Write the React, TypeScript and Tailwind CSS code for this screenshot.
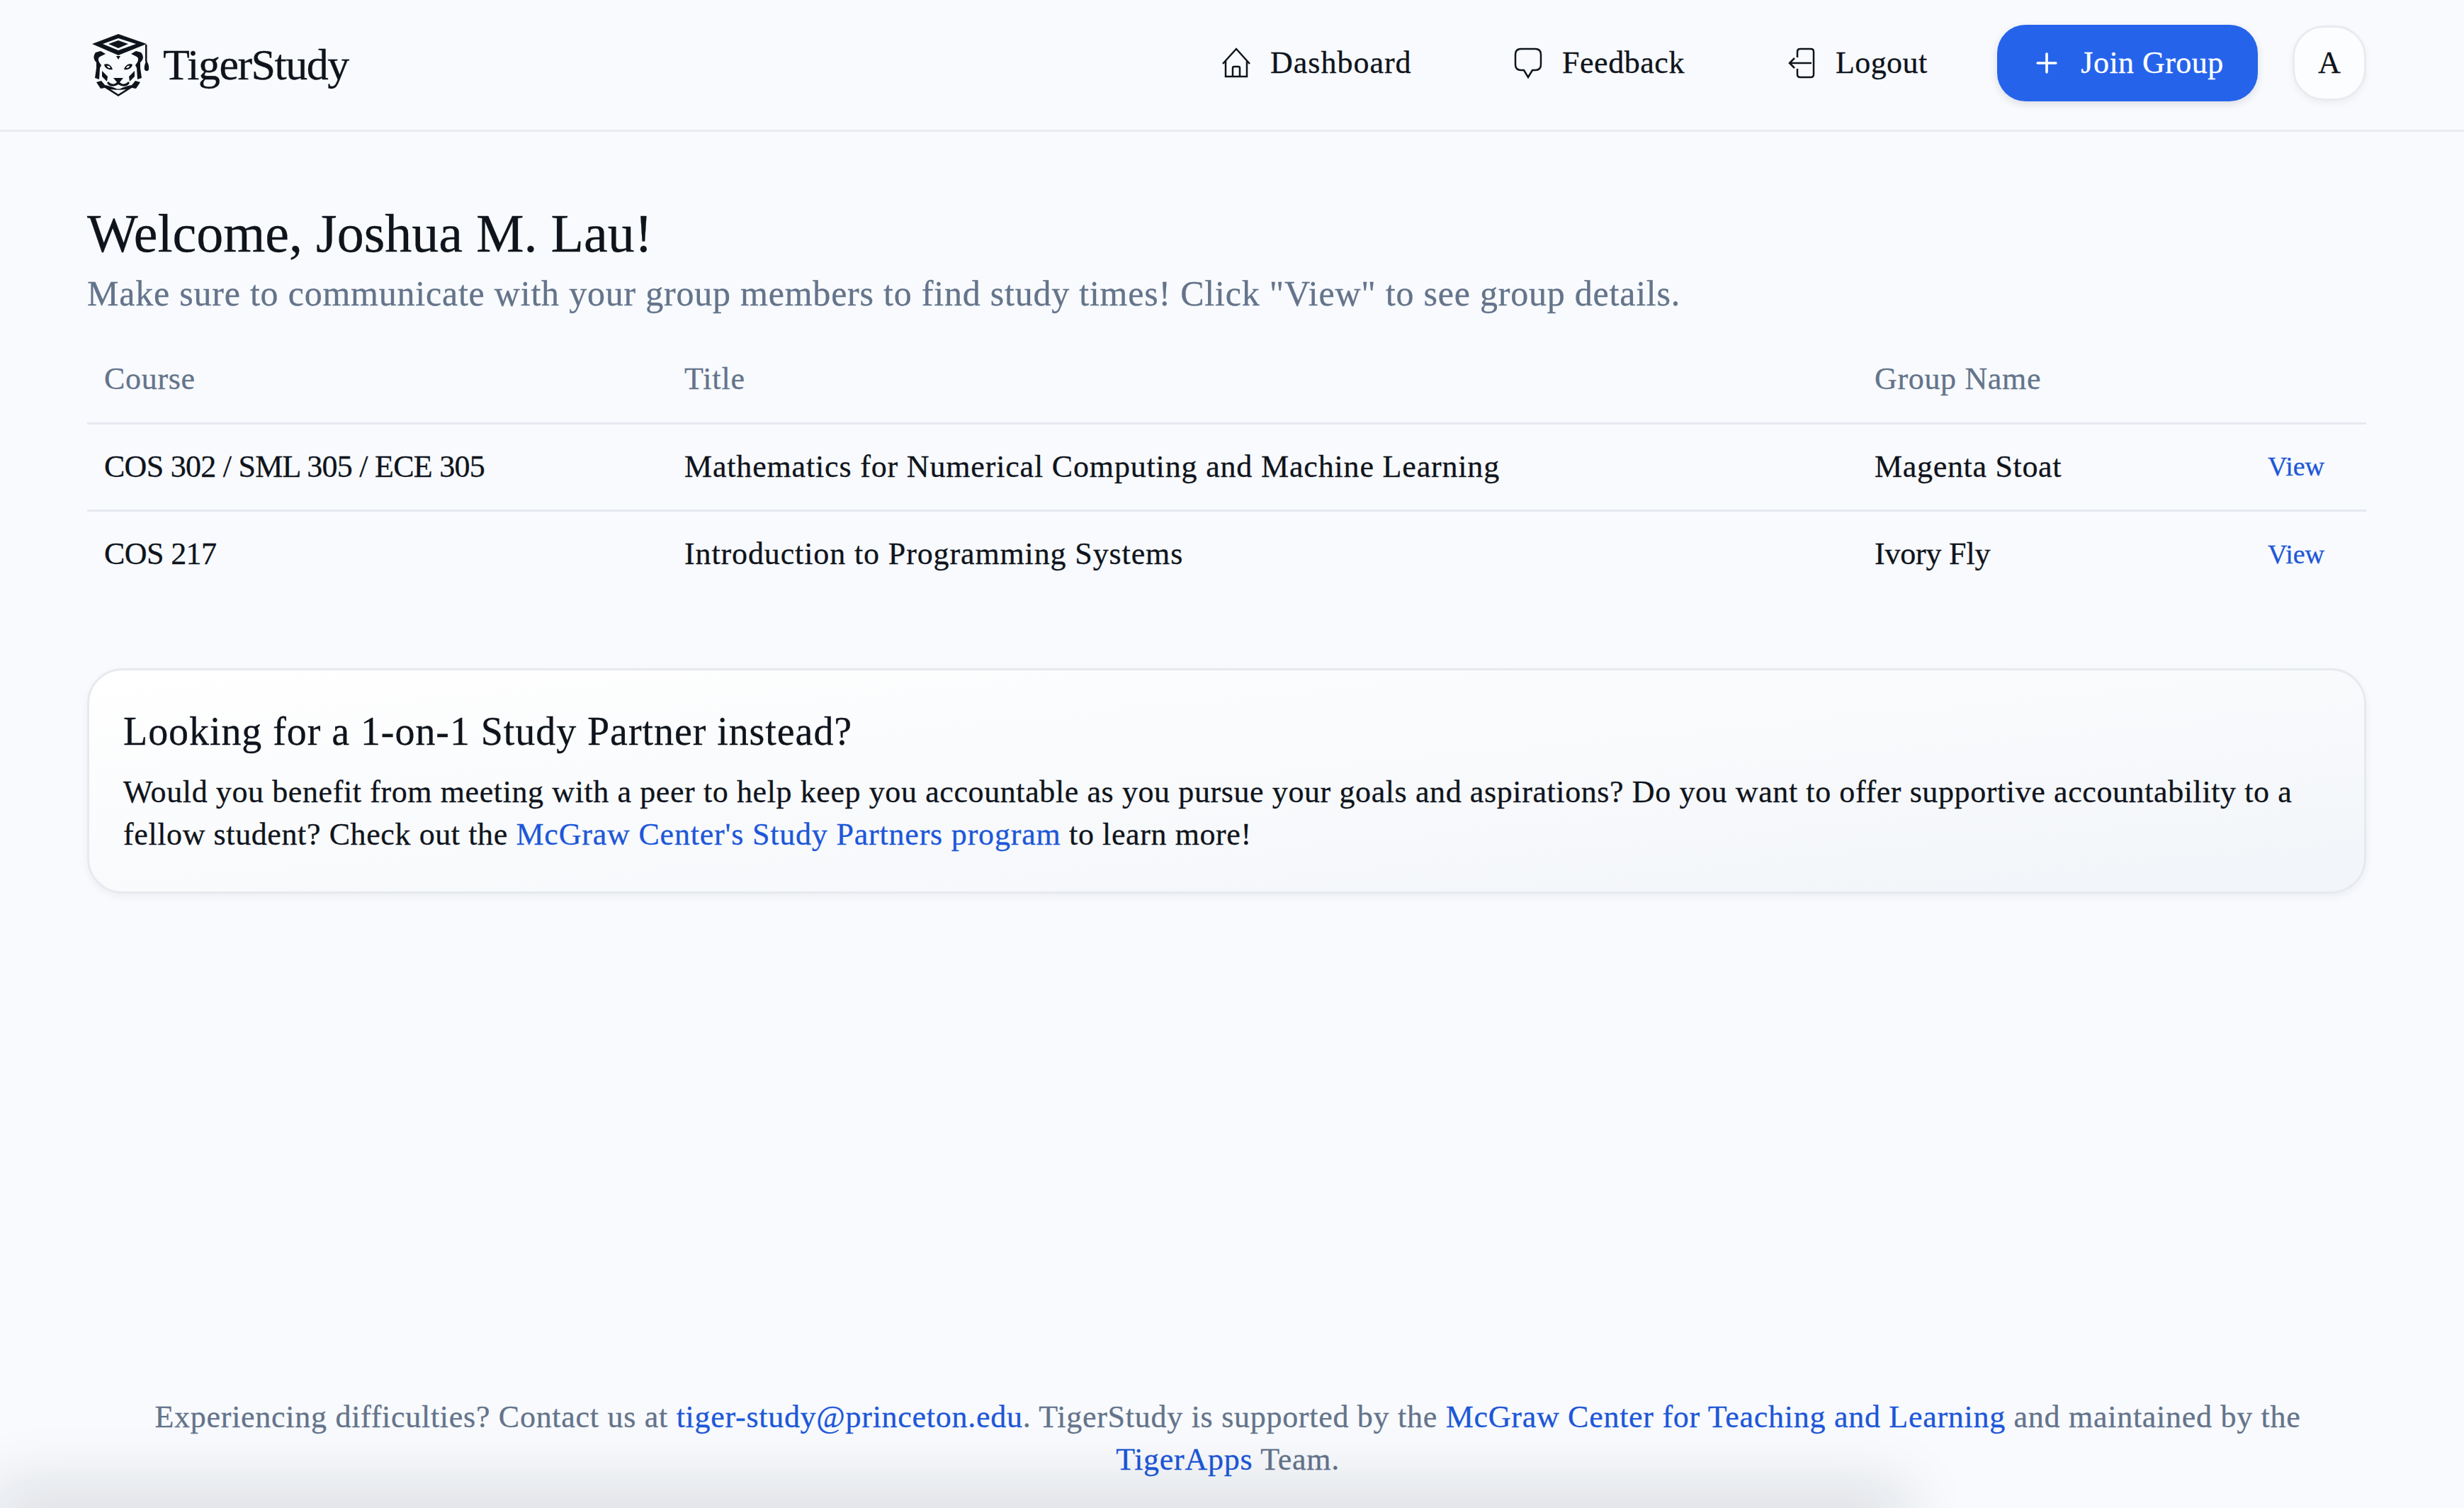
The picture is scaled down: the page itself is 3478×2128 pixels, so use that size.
import { Plus } from "lucide-react";

const serif = "font-['Liberation_Serif',serif]";

function TigerLogo() {
  return (
    <svg viewBox="0 0 80 88" className="h-[88px] w-[80px] shrink-0" fill="#0f141c">
      {/* cap */}
      <path fillRule="evenodd" d="M37 0 L77 14 L37 30 L0 14 Z M37 6 L15 14 L37 23 L62 14 Z" />
      <path d="M37 9 L51 14 L37 20 L23 14 Z" />
      <path d="M75 15 h2.5 v24 h-2.5 z" />
      <path d="M76.5 37 C79 41 81 46 80 50 C79 53 75 53 74 50 C73 46 75 41 76.5 37 Z" />
      {/* ears and head */}
      <path d="M5 26 C2 30 1 35 6 40 L6 48 L4 62 L10 64 L11 48 L13 44 C8 38 7 33 13 31 L19 28 L12 24 Z" />
      <path d="M69 26 C73 31 73 36 68 40 L68 48 L70 62 L64 64 L63 48 L61 44 C66 38 67 33 61 31 L55 28 L62 24 Z" />
      {/* eyes */}
      <path fillRule="evenodd" d="M17 43 C21 41 27 43 29 50 C24 51 18 49 17 43 Z M21 45 C22 48 24 48 26 48 C25 45 23 44 21 45 Z" />
      <path fillRule="evenodd" d="M57 43 C53 41 47 43 45 50 C50 51 56 49 57 43 Z M53 45 C52 48 50 48 48 48 C49 45 51 44 53 45 Z" />
      {/* stripes */}
      <path d="M14 52 L22 60 L21 67 L14 60 Z" />
      <path d="M60 52 L52 60 L53 67 L60 60 Z" />
      <path d="M34 31 L40 31 L37 36 Z" />
      {/* muzzle */}
      <path d="M30 62 H44 L39 68 C43 72 48 71 51 67 L53 69 C49 75 43 75 37 71 C31 75 25 75 21 69 L23 67 C26 71 31 72 35 68 Z" />
      <path d="M6 68 L13 66 L18 72 L23 73 L32 76 C35 78 39 78 42 76 L51 73 L56 72 L61 66 L68 68 L62 77 L56 76 L37 88 L18 76 L12 77 Z" />
      <path fill="#f8fafd" d="M26 78 C30 79 44 79 48 78 L37 85 Z" />
    </svg>
  );
}

function HouseIcon() {
  return (
    <svg viewBox="0 0 40 44" className="h-[44px] w-[40px]" fill="none" stroke="#0f141c" strokeWidth="2.5">
      <path d="M1 23 L20 2 L39 23" />
      <path d="M5 19 V41 H35 V19" />
      <path d="M15 41 V29 Q15 27 17 27 H23 Q25 27 25 29 V41" />
    </svg>
  );
}

function BubbleIcon() {
  return (
    <svg viewBox="0 0 40 44" className="h-[44px] w-[40px]" fill="none" stroke="#0f141c" strokeWidth="2.5">
      <path d="M10 2 H30 Q38 2 38 10 V24 Q38 32 30 32 H26 L20 42 L14 32 H10 Q2 32 2 24 V10 Q2 2 10 2 Z" />
    </svg>
  );
}

function LogoutIcon() {
  return (
    <svg viewBox="0 0 40 44" className="h-[44px] w-[40px]" fill="none" stroke="#0f141c" strokeWidth="2.5">
      <path d="M14 14 V6 Q14 2 18 2 H33 Q37 2 37 6 V38 Q37 42 33 42 H18 Q14 42 14 38 V30" />
      <path d="M34 22 H3 M10 15 L3 22 L10 29" />
    </svg>
  );
}

function NavLink({ icon, label, className }: { icon: React.ReactNode; label: string; className: string }) {
  return (
    <a className={`flex items-center gap-[28px] text-[44px] text-[#0f141c] ${className}`}>
      {icon}
      <span>{label}</span>
    </a>
  );
}

export default function App() {
  return (
    <div className={`${serif} relative flex min-h-screen flex-col overflow-hidden bg-[#f8fafd] text-[#0f141c] [-webkit-text-stroke:0.3px]`}>
      {/* Header */}
      <header className="flex h-[186px] shrink-0 items-center justify-between border-b-[3px] border-[#e8ebef] pl-[130px] pr-[138px]">
        <div className="flex items-center gap-[20px]">
          <TigerLogo />
          <span className="text-[62px] tracking-[-1.5px]">TigerStudy</span>
        </div>
        <nav className="mb-[6px] flex items-center">
          <NavLink icon={<HouseIcon />} label="Dashboard" className="w-[412px] tracking-[1px]" />
          <NavLink icon={<BubbleIcon />} label="Feedback" className="w-[386px] tracking-[0.55px]" />
          <NavLink icon={<LogoutIcon />} label="Logout" className="w-[296px] tracking-[0.4px]" />
          <button className="flex h-[108px] w-[368px] items-center justify-center gap-[26px] rounded-[40px] bg-[#2563eb] text-[44px] tracking-[0.45px] text-white shadow-[0_4px_12px_rgba(15,23,42,0.12)]">
            <Plus size={44} strokeWidth={2} />
            Join Group
          </button>
          <div className="ml-[49px] flex h-[106px] w-[104px] items-center justify-center rounded-[44px] border-[3px] border-[#e8ebef] bg-white/60 text-[44px] shadow-[0_4px_10px_rgba(15,23,42,0.05)]">
            A
          </div>
        </nav>
      </header>

      {/* Content */}
      <main className="pl-[123px] pr-[138px] pt-[98px]">
        <h1 className="text-[76px] leading-[90px]">Welcome, Joshua M. Lau!</h1>
        <p className="mt-[5px] text-[50px] leading-[70px] tracking-[0.78px] text-[#64748b]">
          Make sure to communicate with your group members to find study times! Click "View" to see group details.
        </p>

        <table className="mt-[26px] w-full table-fixed text-left text-[44px]">
          <colgroup>
            <col className="w-[819px]" />
            <col className="w-[1680px]" />
            <col className="w-[555px]" />
            <col />
          </colgroup>
          <thead>
            <tr className="h-[122px] border-b-[3px] border-[#e6e9ee] text-[#64748b]">
              <th className="pl-[24px] font-normal tracking-[0.7px]">Course</th>
              <th className="pl-[24px] font-normal tracking-[0.9px]">Title</th>
              <th className="pl-[24px] font-normal tracking-[0.66px]">Group Name</th>
              <th />
            </tr>
          </thead>
          <tbody>
            <tr className="h-[123px] border-b-[3px] border-[#e6e9ee]">
              <td className="pl-[24px] tracking-[-0.74px]">COS 302 / SML 305 / ECE 305</td>
              <td className="pl-[24px] tracking-[0.83px]">Mathematics for Numerical Computing and Machine Learning</td>
              <td className="pl-[24px] tracking-[0.68px]">Magenta Stoat</td>
              <td className="pl-[24px] text-[38px] text-[#1d57d8]">View</td>
            </tr>
            <tr className="h-[123px]">
              <td className="pl-[24px] tracking-[-0.6px]">COS 217</td>
              <td className="pl-[24px] tracking-[0.88px]">Introduction to Programming Systems</td>
              <td className="pl-[24px] tracking-[-0.2px]">Ivory Fly</td>
              <td className="pl-[24px] text-[38px] text-[#1d57d8]">View</td>
            </tr>
          </tbody>
        </table>

        <section className="mt-[100px] h-[318px] rounded-[50px] border-[3px] border-[#e6e9ee] bg-gradient-to-br from-white to-[#f2f5f9] px-[48px] pt-[48px] shadow-[0_4px_12px_rgba(15,23,42,0.05)]">
          <h2 className="text-[56px] leading-[76px] tracking-[0.93px]">Looking for a 1-on-1 Study Partner instead?</h2>
          <p className="mt-[18px] text-[44px] leading-[60px] tracking-[0.6px]">
            Would you benefit from meeting with a peer to help keep you accountable as you pursue your goals and
            aspirations? Do you want to offer supportive accountability to a fellow student? Check out the{" "}
            <a className="tracking-[0.8px] text-[#1d57d8]">McGraw Center's Study Partners program</a> to learn more!
          </p>
        </section>
      </main>

      {/* Footer */}
      <footer className="mt-auto pb-[38px] pl-[194px] pr-[206px] text-center text-[44px] leading-[60px] tracking-[0.72px] text-[#64748b]">
        Experiencing difficulties? Contact us at <a className="text-[#1d57d8]">tiger-study@princeton.edu</a>. TigerStudy
        is supported by the <a className="text-[#1d57d8]">McGraw Center for Teaching and Learning</a> and maintained by
        the <a className="text-[#1d57d8]">TigerApps</a> Team.
      </footer>

      {/* soft shade along the bottom edge */}
      <div className="absolute bottom-[-30px] left-[20px] h-[30px] w-[2640px] shadow-[0_0_90px_30px_rgba(15,23,42,0.13)]" />
    </div>
  );
}
